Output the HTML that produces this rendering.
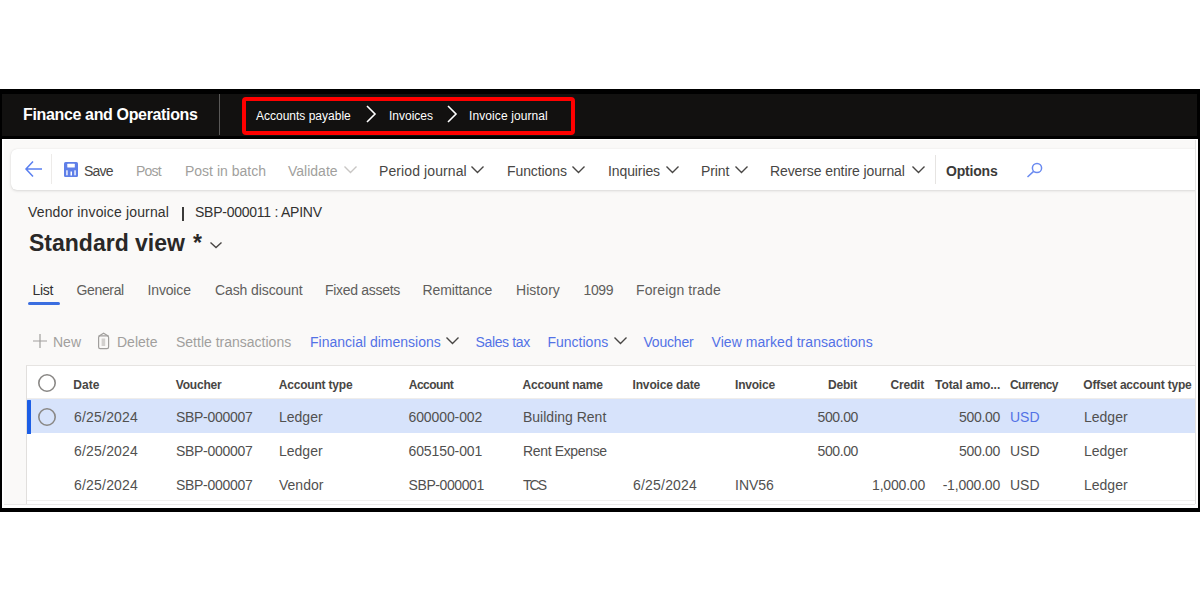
<!DOCTYPE html>
<html><head><meta charset="utf-8">
<style>
*{margin:0;padding:0;box-sizing:border-box}
html,body{width:1200px;height:600px;background:#fff;overflow:hidden;font-family:"Liberation Sans",sans-serif}
.a{position:absolute;white-space:nowrap;line-height:1}
</style></head><body>
<div class="a" style="left:0;top:89px;width:1200px;height:423px;background:#000"></div>
<div class="a" style="left:2px;top:93.5px;width:1195px;height:42px;background:#121110"></div>
<div class="a" style="left:23px;top:106.86px;font-size:16px;color:#fff;font-weight:bold;letter-spacing:-0.35px;">Finance and Operations</div>
<div class="a" style="left:219px;top:94px;width:1px;height:41px;background:#5a5958"></div>
<div class="a" style="left:242px;top:97px;width:333px;height:38px;border:4px solid #ff0000;border-radius:4px"></div>
<div class="a" style="left:256px;top:110.14px;font-size:12px;color:#fff;font-weight:normal;">Accounts payable</div>
<div class="a" style="left:389px;top:110.14px;font-size:12px;color:#fff;font-weight:normal;">Invoices</div>
<div class="a" style="left:469px;top:110.14px;font-size:12px;color:#fff;font-weight:normal;letter-spacing:0.1px;">Invoice journal</div>
<svg class="a" style="left:364px;top:104px" width="14" height="20"><path d="M3 2 L11 10 L3 18" fill="none" stroke="#fff" stroke-width="1.6"/></svg>
<svg class="a" style="left:445px;top:104px" width="14" height="20"><path d="M3 2 L11 10 L3 18" fill="none" stroke="#fff" stroke-width="1.6"/></svg>
<div class="a" style="left:2px;top:138.5px;width:1195.5px;height:369px;background:#fff"></div>
<div class="a" style="left:4px;top:140px;width:1191px;height:367px;background:#faf9f8;overflow:hidden"><div class="a" style="left:7px;top:9px;width:1200px;height:41px;background:#fff;border-radius:6px;box-shadow:0 1px 3px rgba(0,0,0,0.13),0 0 1px rgba(0,0,0,0.10)"></div></div>
<div class="a" style="left:1195px;top:140px;width:1px;height:365px;background:#e6e5e4"></div>
<svg class="a" style="left:24px;top:159px" width="20" height="20"><path d="M2 10 L18 10 M9 2.5 L2 10 L9 17.5" fill="none" stroke="#5a7ff0" stroke-width="1.5"/></svg>
<div class="a" style="left:51px;top:154px;width:1px;height:30px;background:#edebe9"></div>
<svg class="a" style="left:64px;top:161.5px" width="14" height="15.5"><rect x="0" y="0" width="14" height="15.2" rx="1.6" fill="#5f7fe8"/><rect x="3.3" y="1.8" width="7.5" height="3.8" rx="0.5" fill="#fff"/><rect x="2.2" y="8.3" width="1.5" height="5" fill="#eef1fc"/><rect x="6.5" y="9.5" width="1.5" height="4" fill="#fff"/><rect x="10.3" y="8.3" width="1.5" height="5" fill="#eef1fc"/></svg>
<div class="a" style="left:84px;top:164.15px;font-size:14px;color:#484644;font-weight:normal;letter-spacing:-0.8px;">Save</div>
<div class="a" style="left:136px;top:164.15px;font-size:14px;color:#a19f9d;font-weight:normal;letter-spacing:-0.8px;">Post</div>
<div class="a" style="left:185px;top:164.15px;font-size:14px;color:#a19f9d;font-weight:normal;">Post in batch</div>
<div class="a" style="left:288px;top:164.15px;font-size:14px;color:#a19f9d;font-weight:normal;">Validate</div>
<svg class="a" style="left:343px;top:165px" width="15" height="9"><path d="M1.5 1.5 L7.5 7.5 L13.5 1.5" fill="none" stroke="#c8c6c4" stroke-width="1.4"/></svg>
<div class="a" style="left:379px;top:164.15px;font-size:14px;color:#484644;font-weight:normal;letter-spacing:0.1px;">Period journal</div>
<svg class="a" style="left:470px;top:165px" width="15" height="9"><path d="M1.5 1.5 L7.5 7.5 L13.5 1.5" fill="none" stroke="#484644" stroke-width="1.4"/></svg>
<div class="a" style="left:507px;top:164.15px;font-size:14px;color:#484644;font-weight:normal;letter-spacing:-0.1px;">Functions</div>
<svg class="a" style="left:571px;top:165px" width="15" height="9"><path d="M1.5 1.5 L7.5 7.5 L13.5 1.5" fill="none" stroke="#484644" stroke-width="1.4"/></svg>
<div class="a" style="left:608px;top:164.15px;font-size:14px;color:#484644;font-weight:normal;letter-spacing:-0.1px;">Inquiries</div>
<svg class="a" style="left:665px;top:165px" width="15" height="9"><path d="M1.5 1.5 L7.5 7.5 L13.5 1.5" fill="none" stroke="#484644" stroke-width="1.4"/></svg>
<div class="a" style="left:701px;top:164.15px;font-size:14px;color:#484644;font-weight:normal;letter-spacing:-0.1px;">Print</div>
<svg class="a" style="left:734px;top:165px" width="15" height="9"><path d="M1.5 1.5 L7.5 7.5 L13.5 1.5" fill="none" stroke="#484644" stroke-width="1.4"/></svg>
<div class="a" style="left:770px;top:164.15px;font-size:14px;color:#484644;font-weight:normal;letter-spacing:-0.1px;">Reverse entire journal</div>
<svg class="a" style="left:911px;top:165px" width="15" height="9"><path d="M1.5 1.5 L7.5 7.5 L13.5 1.5" fill="none" stroke="#484644" stroke-width="1.4"/></svg>
<div class="a" style="left:935px;top:155px;width:1px;height:29px;background:#e6e4e2"></div>
<div class="a" style="left:946px;top:164.15px;font-size:14px;color:#3b3a39;font-weight:bold;letter-spacing:-0.2px;">Options</div>
<svg class="a" style="left:1026px;top:162px" width="18" height="16"><circle cx="11" cy="6" r="4.6" fill="none" stroke="#6a8af0" stroke-width="1.5"/><path d="M7.6 9.4 L1.5 15" stroke="#6a8af0" stroke-width="1.5"/></svg>
<div class="a" style="left:28px;top:205.45px;font-size:14px;color:#323130;font-weight:normal;letter-spacing:0.15px;">Vendor invoice journal</div>
<div class="a" style="left:182px;top:206.5px;width:1.6px;height:14px;background:#3b3a39"></div>
<div class="a" style="left:195px;top:205.45px;font-size:14px;color:#323130;font-weight:normal;letter-spacing:-0.25px;">SBP-000011 : APINV</div>
<div class="a" style="left:29px;top:231.53px;font-size:23px;color:#292827;font-weight:bold;">Standard view</div>
<div class="a" style="left:193px;top:232.03px;font-size:23px;color:#292827;font-weight:bold;">*</div>
<svg class="a" style="left:209px;top:241px" width="14" height="8"><path d="M1.5 1.5 L7.0 6.5 L12.5 1.5" fill="none" stroke="#484644" stroke-width="1.4"/></svg>
<div class="a" style="left:32.5px;top:283.15px;font-size:14px;color:#323130;font-weight:normal;letter-spacing:-0.3px;">List</div>
<div class="a" style="left:76.5px;top:283.15px;font-size:14px;color:#605e5c;font-weight:normal;letter-spacing:-0.35px;">General</div>
<div class="a" style="left:147.5px;top:283.15px;font-size:14px;color:#605e5c;font-weight:normal;letter-spacing:-0.15px;">Invoice</div>
<div class="a" style="left:215px;top:283.15px;font-size:14px;color:#605e5c;font-weight:normal;letter-spacing:-0.1px;">Cash discount</div>
<div class="a" style="left:325px;top:283.15px;font-size:14px;color:#605e5c;font-weight:normal;letter-spacing:-0.3px;">Fixed assets</div>
<div class="a" style="left:422.5px;top:283.15px;font-size:14px;color:#605e5c;font-weight:normal;letter-spacing:-0.1px;">Remittance</div>
<div class="a" style="left:516px;top:283.15px;font-size:14px;color:#605e5c;font-weight:normal;letter-spacing:0.05px;">History</div>
<div class="a" style="left:583.5px;top:283.15px;font-size:14px;color:#605e5c;font-weight:normal;letter-spacing:-0.35px;">1099</div>
<div class="a" style="left:636px;top:283.15px;font-size:14px;color:#605e5c;font-weight:normal;letter-spacing:0.12px;">Foreign trade</div>
<div class="a" style="left:27.5px;top:302px;width:32px;height:3px;background:#3b6ee0;border-radius:2px"></div>
<svg class="a" style="left:33px;top:334px" width="14" height="14"><path d="M7 0 V14 M0 7 H14" stroke="#a19f9d" stroke-width="1.2"/></svg>
<div class="a" style="left:53px;top:334.65px;font-size:14px;color:#a19f9d;font-weight:normal;">New</div>
<svg class="a" style="left:97px;top:332px" width="14" height="18"><path d="M1.6 4.2 L6.6 1.2 L11.6 4.2" fill="none" stroke="#a19f9d" stroke-width="1.2"/><rect x="1.6" y="3.8" width="10" height="12.8" rx="1.6" fill="none" stroke="#a19f9d" stroke-width="1.2"/><rect x="4.6" y="6.5" width="3.6" height="7.5" fill="#d2d0ce"/></svg>
<div class="a" style="left:117px;top:334.65px;font-size:14px;color:#a19f9d;font-weight:normal;">Delete</div>
<div class="a" style="left:176px;top:334.65px;font-size:14px;color:#a19f9d;font-weight:normal;">Settle transactions</div>
<div class="a" style="left:310px;top:334.65px;font-size:14px;color:#5372e6;font-weight:normal;">Financial dimensions</div>
<svg class="a" style="left:445px;top:336px" width="15" height="9"><path d="M1.5 1.5 L7.5 7.5 L13.5 1.5" fill="none" stroke="#484644" stroke-width="1.4"/></svg>
<div class="a" style="left:475.5px;top:334.65px;font-size:14px;color:#5372e6;font-weight:normal;letter-spacing:-0.35px;">Sales tax</div>
<div class="a" style="left:547.5px;top:334.65px;font-size:14px;color:#5372e6;font-weight:normal;">Functions</div>
<svg class="a" style="left:613px;top:336px" width="15" height="9"><path d="M1.5 1.5 L7.5 7.5 L13.5 1.5" fill="none" stroke="#484644" stroke-width="1.4"/></svg>
<div class="a" style="left:643.5px;top:334.65px;font-size:14px;color:#5372e6;font-weight:normal;letter-spacing:-0.2px;">Voucher</div>
<div class="a" style="left:711.5px;top:334.65px;font-size:14px;color:#5372e6;font-weight:normal;letter-spacing:0.05px;">View marked transactions</div>
<div class="a" style="left:3px;top:504px;width:1193px;height:3.5px;background:#fff"></div>
<div class="a" style="left:4px;top:504px;width:1191px;height:1px;background:#e9e8e7"></div>
<div class="a" style="left:26px;top:365px;width:1170px;height:139px;background:#fff;border-top:1.5px solid #e6e4e2;border-left:1px solid #e1dfdd;border-right:1px solid #e3e2e1"></div>
<div class="a" style="left:27px;top:500px;width:1168px;height:1px;background:#f0efee"></div>
<div class="a" style="left:27px;top:398px;width:1168px;height:1px;background:#efedeb"></div>
<div class="a" style="left:27px;top:399px;width:1168px;height:34px;background:#d7e3fb"></div>
<div class="a" style="left:27px;top:399.5px;width:3.5px;height:34px;background:#1c5ee6;border-radius:0.5px"></div>
<svg class="a" style="left:37px;top:373px" width="20" height="20"><circle cx="10" cy="10" r="8.2" fill="none" stroke="#8a8886" stroke-width="1.6"/></svg>
<svg class="a" style="left:37px;top:407px" width="20" height="20"><circle cx="10" cy="10" r="8.2" fill="none" stroke="#8a8886" stroke-width="1.6"/></svg>
<div class="a" style="left:73.3px;top:379.04px;font-size:12px;color:#484644;font-weight:bold;">Date</div>
<div class="a" style="left:175.8px;top:379.04px;font-size:12px;color:#484644;font-weight:bold;letter-spacing:-0.2px;">Voucher</div>
<div class="a" style="left:278.75px;top:379.04px;font-size:12px;color:#484644;font-weight:bold;letter-spacing:-0.2px;">Account type</div>
<div class="a" style="left:408.75px;top:379.04px;font-size:12px;color:#484644;font-weight:bold;letter-spacing:-0.5px;">Account</div>
<div class="a" style="left:522.5px;top:379.04px;font-size:12px;color:#484644;font-weight:bold;letter-spacing:-0.2px;">Account name</div>
<div class="a" style="left:632.5px;top:379.04px;font-size:12px;color:#484644;font-weight:bold;letter-spacing:-0.15px;">Invoice date</div>
<div class="a" style="left:735px;top:379.04px;font-size:12px;color:#484644;font-weight:bold;letter-spacing:-0.2px;">Invoice</div>
<div class="a" style="left:1010px;top:379.04px;font-size:12px;color:#484644;font-weight:bold;letter-spacing:-0.6px;">Currency</div>
<div class="a" style="left:1083.3px;top:379.04px;font-size:12px;color:#484644;font-weight:bold;letter-spacing:-0.2px;">Offset account type</div>
<div class="a" style="right:343px;top:379.04px;font-size:12px;color:#484644;font-weight:bold;letter-spacing:-0.2px;">Debit</div>
<div class="a" style="right:276px;top:379.04px;font-size:12px;color:#484644;font-weight:bold;letter-spacing:-0.2px;">Credit</div>
<div class="a" style="left:935px;top:379.04px;font-size:12px;color:#484644;font-weight:bold;letter-spacing:-0.05px;">Total amo...</div>
<div class="a" style="left:74px;top:410.15px;font-size:14px;color:#51504f;font-weight:normal;letter-spacing:0.2px;">6/25/2024</div>
<div class="a" style="left:176px;top:410.15px;font-size:14px;color:#51504f;font-weight:normal;letter-spacing:-0.3px;">SBP-000007</div>
<div class="a" style="left:279px;top:410.15px;font-size:14px;color:#51504f;font-weight:normal;">Ledger</div>
<div class="a" style="left:408.5px;top:410.15px;font-size:14px;color:#51504f;font-weight:normal;letter-spacing:-0.1px;">600000-002</div>
<div class="a" style="left:523px;top:410.15px;font-size:14px;color:#51504f;font-weight:normal;">Building Rent</div>
<div class="a" style="right:342px;top:410.15px;font-size:14px;color:#51504f;font-weight:normal;letter-spacing:-0.4px;">500.00</div>
<div class="a" style="right:200px;top:410.15px;font-size:14px;color:#51504f;font-weight:normal;letter-spacing:-0.3px;">500.00</div>
<div class="a" style="left:1010px;top:410.15px;font-size:14px;color:#5372e6;font-weight:normal;">USD</div>
<div class="a" style="left:1084px;top:410.15px;font-size:14px;color:#51504f;font-weight:normal;">Ledger</div>
<div class="a" style="left:74px;top:444.15px;font-size:14px;color:#51504f;font-weight:normal;letter-spacing:0.2px;">6/25/2024</div>
<div class="a" style="left:176px;top:444.15px;font-size:14px;color:#51504f;font-weight:normal;letter-spacing:-0.3px;">SBP-000007</div>
<div class="a" style="left:279px;top:444.15px;font-size:14px;color:#51504f;font-weight:normal;">Ledger</div>
<div class="a" style="left:408.5px;top:444.15px;font-size:14px;color:#51504f;font-weight:normal;letter-spacing:-0.1px;">605150-001</div>
<div class="a" style="left:523px;top:444.15px;font-size:14px;color:#51504f;font-weight:normal;letter-spacing:-0.35px;">Rent Expense</div>
<div class="a" style="right:342px;top:444.15px;font-size:14px;color:#51504f;font-weight:normal;letter-spacing:-0.4px;">500.00</div>
<div class="a" style="right:200px;top:444.15px;font-size:14px;color:#51504f;font-weight:normal;letter-spacing:-0.3px;">500.00</div>
<div class="a" style="left:1010px;top:444.15px;font-size:14px;color:#51504f;font-weight:normal;">USD</div>
<div class="a" style="left:1084px;top:444.15px;font-size:14px;color:#51504f;font-weight:normal;">Ledger</div>
<div class="a" style="left:74px;top:478.15px;font-size:14px;color:#51504f;font-weight:normal;letter-spacing:0.2px;">6/25/2024</div>
<div class="a" style="left:176px;top:478.15px;font-size:14px;color:#51504f;font-weight:normal;letter-spacing:-0.3px;">SBP-000007</div>
<div class="a" style="left:279px;top:478.15px;font-size:14px;color:#51504f;font-weight:normal;">Vendor</div>
<div class="a" style="left:408.5px;top:478.15px;font-size:14px;color:#51504f;font-weight:normal;letter-spacing:-0.4px;">SBP-000001</div>
<div class="a" style="left:523px;top:478.15px;font-size:14px;color:#51504f;font-weight:normal;letter-spacing:-2px;">TCS</div>
<div class="a" style="left:633px;top:478.15px;font-size:14px;color:#51504f;font-weight:normal;letter-spacing:0.2px;">6/25/2024</div>
<div class="a" style="left:735px;top:478.15px;font-size:14px;color:#51504f;font-weight:normal;">INV56</div>
<div class="a" style="right:275px;top:478.15px;font-size:14px;color:#51504f;font-weight:normal;letter-spacing:-0.2px;">1,000.00</div>
<div class="a" style="right:200px;top:478.15px;font-size:14px;color:#51504f;font-weight:normal;letter-spacing:-0.2px;">-1,000.00</div>
<div class="a" style="left:1010px;top:478.15px;font-size:14px;color:#51504f;font-weight:normal;">USD</div>
<div class="a" style="left:1084px;top:478.15px;font-size:14px;color:#51504f;font-weight:normal;">Ledger</div>
</body></html>
